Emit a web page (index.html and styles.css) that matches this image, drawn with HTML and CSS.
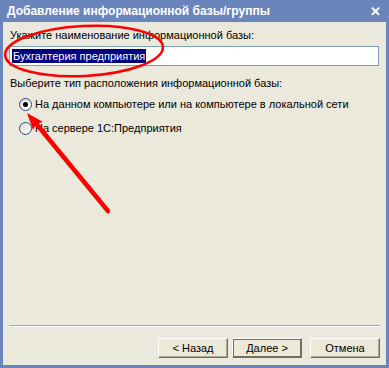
FILE: index.html
```html
<!DOCTYPE html>
<html lang="ru">
<head>
    <meta charset="UTF-8">
    <title>Добавление информационной базы/группы</title>
    <link rel="stylesheet" href="styles.css">
</head>
<body>
    <div class="window">
        <div class="titlebar">
            <span class="title">Добавление информационной базы/группы</span>
            <span class="close">&#x2715;</span>
        </div>
        <div class="frame">
            <div class="content">
                <div class="label">Укажите наименование информационной базы:</div>
                <div class="input"><span class="selected">Бухгалтерия предприятия</span></div>

                <div class="label second">Выберите тип расположения информационной базы:</div>
                <div class="radio-row">
                    <span class="radio checked"></span>
                    <span>На данном компьютере или на компьютере в локальной сети</span>
                </div>
                <div class="radio-row">
                    <span class="radio"></span>
                    <span>На сервере 1С:Предприятия</span>
                </div>

                <div class="spacer"></div>
                <div class="separator"></div>
                <div class="buttons">
                    <button>&lt; Назад</button>
                    <button class="default">Далее &gt;</button>
                    <button class="cancel">Отмена</button>
                </div>
            </div>
        </div>

        <!-- red marks drawn over the dialog -->
        <svg class="marks" width="389" height="368" viewBox="0 0 389 368">
            <ellipse cx="84" cy="51" rx="79" ry="25" transform="rotate(-3 84 51)" fill="none" stroke="#f00" stroke-width="2.5"/>
            <line x1="108" y1="211" x2="34" y2="121" stroke="#f00" stroke-width="4.5" stroke-linecap="round"/>
            <polygon points="27,113 43,122 36,124 33,130" fill="#f00"/>
        </svg>
    </div>
</body>
</html>
```

FILE: styles.css
```css
body {
    margin: 0;
    font-family: "Liberation Sans", Arial, sans-serif;
    font-size: 11px;
    color: #000;
    background: #ece9d8;
}
.window {
    position: relative;
    width: 389px;
    height: 368px;
    display: flex;
    flex-direction: column;
}
.titlebar {
    height: 22px;
    background: #6a84bc;
    color: #fff;
    display: flex;
    align-items: center;
    justify-content: space-between;
    padding: 0 8px 0 7px;
}
.title {
    font-size: 12px;
    font-weight: bold;
}
.close {
    font-size: 13px;
    font-weight: bold;
}
.frame {
    flex: 1;
    display: flex;
    border-left: 3px solid #6a84bc;
    border-right: 3px solid #6a84bc;
    border-bottom: 3px solid #6a84bc;
    background: #ebe8dc;
}
.content {
    flex: 1;
    display: flex;
    flex-direction: column;
    padding: 7px 6px 7px 6px;
}
.label {
    line-height: 13px;
    padding-left: 1px;
}
.label.second {
    margin-top: 11px;
}
.input {
    margin-top: 4px;
    width: 366px;
    height: 18px;
    background: #fff;
    border: 1px solid #7f9db9;
    display: flex;
    align-items: center;
    padding-left: 2px;
}
.selected {
    background: #000080;
    color: #fff;
    line-height: 14px;
    padding: 0 1px;
}
.radio-row {
    display: flex;
    align-items: center;
    height: 16px;
    margin-top: 6px;
    padding-left: 10px;
}
.radio-row + .radio-row {
    margin-top: 8px;
}
.radio {
    width: 11px;
    height: 11px;
    border-radius: 50%;
    border: 1px solid #1c5180;
    background: linear-gradient(135deg, #dcdcd4, #fff);
    margin-right: 3px;
    display: flex;
    align-items: center;
    justify-content: center;
}
.radio.checked::after {
    content: "";
    width: 5px;
    height: 5px;
    border-radius: 50%;
    background: #000;
}
.spacer {
    flex: 1;
}
.separator {
    width: 371px;
    border-top: 1px solid #aca899;
    border-bottom: 1px solid #fff;
}
.buttons {
    display: flex;
    justify-content: flex-end;
    margin-top: 11px;
}
button {
    width: 70px;
    height: 20px;
    margin-left: 4px;
    font-family: "Liberation Sans", Arial, sans-serif;
    font-size: 11px;
    background: #ece9d8;
    border: 1px solid;
    border-color: #fff #716f64 #716f64 #fff;
    box-shadow: inset -1px -1px 0 #aca899;
    padding: 0;
}
button.default {
    outline: 1px solid #716f64;
    outline-offset: -2px;
}
button.cancel {
    margin-left: 8px;
}
.marks {
    position: absolute;
    left: 0;
    top: 0;
    pointer-events: none;
}
```
